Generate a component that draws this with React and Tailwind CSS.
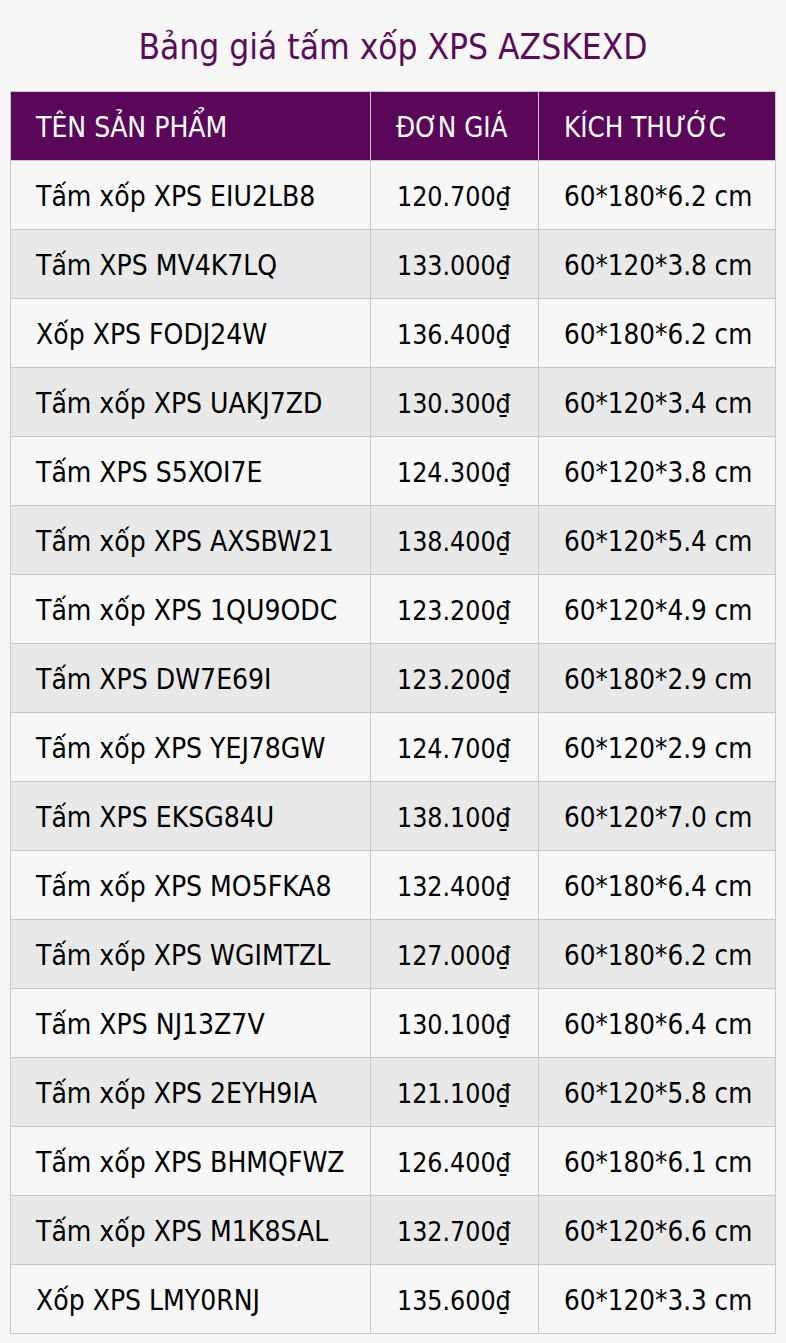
const rows = [
  ["Tấm xốp XPS EIU2LB8", "120.700₫", "60*180*6.2 cm"],
  ["Tấm XPS MV4K7LQ", "133.000₫", "60*120*3.8 cm"],
  ["Xốp XPS FODJ24W", "136.400₫", "60*180*6.2 cm"],
  ["Tấm xốp XPS UAKJ7ZD", "130.300₫", "60*120*3.4 cm"],
  ["Tấm XPS S5XOI7E", "124.300₫", "60*120*3.8 cm"],
  ["Tấm xốp XPS AXSBW21", "138.400₫", "60*120*5.4 cm"],
  ["Tấm xốp XPS 1QU9ODC", "123.200₫", "60*120*4.9 cm"],
  ["Tấm XPS DW7E69I", "123.200₫", "60*180*2.9 cm"],
  ["Tấm xốp XPS YEJ78GW", "124.700₫", "60*120*2.9 cm"],
  ["Tấm XPS EKSG84U", "138.100₫", "60*120*7.0 cm"],
  ["Tấm xốp XPS MO5FKA8", "132.400₫", "60*180*6.4 cm"],
  ["Tấm xốp XPS WGIMTZL", "127.000₫", "60*180*6.2 cm"],
  ["Tấm XPS NJ13Z7V", "130.100₫", "60*180*6.4 cm"],
  ["Tấm xốp XPS 2EYH9IA", "121.100₫", "60*120*5.8 cm"],
  ["Tấm xốp XPS BHMQFWZ", "126.400₫", "60*180*6.1 cm"],
  ["Tấm xốp XPS M1K8SAL", "132.700₫", "60*120*6.6 cm"],
  ["Xốp XPS LMY0RNJ", "135.600₫", "60*120*3.3 cm"],
];

export default function App() {
  return (
    <div className="min-h-screen bg-[#f7f7f7] font-['DejaVu_Sans_Condensed','DejaVu_Sans',sans-serif] [font-stretch:condensed] pb-[10px]">
      <h1 className="h-[91px] flex items-center justify-center text-[35px] text-[#5b0b5b] pt-[4px]">
        Bảng giá tấm xốp XPS AZSKEXD
      </h1>
      <div className="px-[10px]">
        <table className="w-full border-collapse table-fixed">
          <colgroup>
            <col className="w-[360px]" />
            <col className="w-[168px]" />
            <col />
          </colgroup>
          <thead>
            <tr className="bg-[#5b0759] text-white h-[69px]">
              <th className="border border-[#c8c8c8] text-left font-normal text-[28px] pl-[25px] pt-[4px]">TÊN SẢN PHẨM</th>
              <th className="border border-[#c8c8c8] text-left font-normal text-[27.5px] pl-[25px] pt-[4px]">ĐƠN GIÁ</th>
              <th className="border border-[#c8c8c8] text-left font-normal text-[27.5px] pl-[25px] pt-[4px]">KÍCH THƯỚC</th>
            </tr>
          </thead>
          <tbody>
            {rows.map((r, i) => (
              <tr key={i} className={`h-[69px] ${i % 2 ? "bg-[#e9e9e9]" : "bg-[#f7f7f7]"}`}>
                <td className="border border-[#c8c8c8] text-[28px] text-black pl-[25px] pt-[3px]">{r[0]}</td>
                <td className="border border-[#c8c8c8] text-[26.5px] text-black pl-[26px] pt-[3px]">{r[1]}</td>
                <td className="border border-[#c8c8c8] text-[27.5px] text-black pl-[25px] pt-[3px]">{r[2]}</td>
              </tr>
            ))}
          </tbody>
        </table>
      </div>
    </div>
  );
}
